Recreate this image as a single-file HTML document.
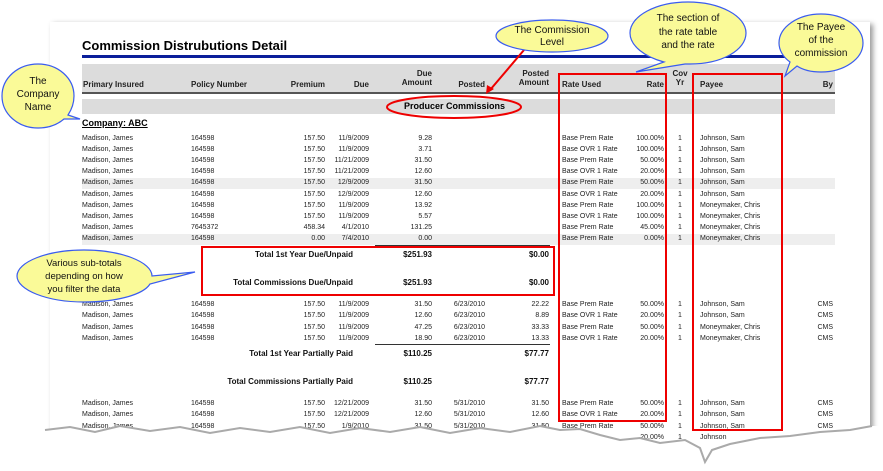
<!DOCTYPE html><html><head><style>
body{margin:0;width:883px;height:471px;overflow:hidden;background:#fff;font-family:"Liberation Sans",sans-serif;position:relative}
.a{position:absolute;white-space:nowrap}
.r{position:absolute;left:0;width:883px;height:11px;font-size:7px;color:#222}
.r span{position:absolute;top:1px;white-space:nowrap}
.s{background:linear-gradient(to right,transparent 82px,#eee 82px,#eee 835px,transparent 835px)}
.c1{left:82px}.c2{left:191px}.c3{right:558px}.c4{right:514px}.c5{right:451px}.c6{right:398px}.c7{right:334px}.c8{left:562px}.c9{right:219px}.c10{left:670px;width:20px;text-align:center}.c11{left:700px}.c12{right:50px}
.h{position:absolute;font-size:8px;font-weight:bold;color:#222;white-space:nowrap}
.t{position:absolute;font-size:8px;font-weight:bold;color:#111}
</style></head><body>
<div class="a" style="left:50px;top:22px;width:820px;height:440px;background:#fff;box-shadow:3px 2px 5px #999"></div>
<div class="a" style="left:82px;top:38px;font-size:13px;font-weight:bold;color:#000">Commission Distrubutions Detail</div>
<div class="a" style="left:82px;top:55px;width:753px;height:3px;background:#0a1e9a"></div>
<div class="a" style="left:82px;top:64px;width:753px;height:28px;background:#dcdcdc"></div>
<div class="a" style="left:82px;top:92px;width:753px;height:2px;background:#555"></div>
<div class="a" style="left:82px;top:99px;width:753px;height:15px;background:#dcdcdc"></div>
<div class="h" style="left:83px;top:80px">Primary Insured</div>
<div class="h" style="left:191px;top:80px">Policy Number</div>
<div class="h" style="right:558px;top:80px">Premium</div>
<div class="h" style="right:514px;top:80px">Due</div>
<div class="h" style="right:451px;top:69px;text-align:right">Due<br>Amount</div>
<div class="h" style="right:398px;top:80px">Posted</div>
<div class="h" style="right:334px;top:69px;text-align:right">Posted<br>Amount</div>
<div class="h" style="left:562px;top:80px">Rate Used</div>
<div class="h" style="right:219px;top:80px">Rate</div>
<div class="h" style="left:670px;width:20px;text-align:center;top:69px">Cov<br>Yr</div>
<div class="h" style="left:700px;top:80px">Payee</div>
<div class="h" style="right:50px;top:80px">By</div>
<div class="a" style="left:404px;top:101px;font-size:9px;font-weight:bold">Producer Commissions</div>
<div class="a" style="left:82px;top:118px;font-size:9px;font-weight:bold;text-decoration:underline">Company: ABC</div>

<div class="r" style="top:134px"><span class="c1">Madison, James</span><span class="c2">164598</span><span class="c3">157.50</span><span class="c4">11/9/2009</span><span class="c5">9.28</span><span class="c8">Base Prem Rate</span><span class="c9">100.00%</span><span class="c10">1</span><span class="c11">Johnson, Sam</span></div>
<div class="r" style="top:145px"><span class="c1">Madison, James</span><span class="c2">164598</span><span class="c3">157.50</span><span class="c4">11/9/2009</span><span class="c5">3.71</span><span class="c8">Base OVR 1 Rate</span><span class="c9">100.00%</span><span class="c10">1</span><span class="c11">Johnson, Sam</span></div>
<div class="r" style="top:156px"><span class="c1">Madison, James</span><span class="c2">164598</span><span class="c3">157.50</span><span class="c4">11/21/2009</span><span class="c5">31.50</span><span class="c8">Base Prem Rate</span><span class="c9">50.00%</span><span class="c10">1</span><span class="c11">Johnson, Sam</span></div>
<div class="r" style="top:167px"><span class="c1">Madison, James</span><span class="c2">164598</span><span class="c3">157.50</span><span class="c4">11/21/2009</span><span class="c5">12.60</span><span class="c8">Base OVR 1 Rate</span><span class="c9">20.00%</span><span class="c10">1</span><span class="c11">Johnson, Sam</span></div>
<div class="r s" style="top:178px"><span class="c1">Madison, James</span><span class="c2">164598</span><span class="c3">157.50</span><span class="c4">12/9/2009</span><span class="c5">31.50</span><span class="c8">Base Prem Rate</span><span class="c9">50.00%</span><span class="c10">1</span><span class="c11">Johnson, Sam</span></div>
<div class="r" style="top:190px"><span class="c1">Madison, James</span><span class="c2">164598</span><span class="c3">157.50</span><span class="c4">12/9/2009</span><span class="c5">12.60</span><span class="c8">Base OVR 1 Rate</span><span class="c9">20.00%</span><span class="c10">1</span><span class="c11">Johnson, Sam</span></div>
<div class="r" style="top:201px"><span class="c1">Madison, James</span><span class="c2">164598</span><span class="c3">157.50</span><span class="c4">11/9/2009</span><span class="c5">13.92</span><span class="c8">Base Prem Rate</span><span class="c9">100.00%</span><span class="c10">1</span><span class="c11">Moneymaker, Chris</span></div>
<div class="r" style="top:212px"><span class="c1">Madison, James</span><span class="c2">164598</span><span class="c3">157.50</span><span class="c4">11/9/2009</span><span class="c5">5.57</span><span class="c8">Base OVR 1 Rate</span><span class="c9">100.00%</span><span class="c10">1</span><span class="c11">Moneymaker, Chris</span></div>
<div class="r" style="top:223px"><span class="c1">Madison, James</span><span class="c2">7645372</span><span class="c3">458.34</span><span class="c4">4/1/2010</span><span class="c5">131.25</span><span class="c8">Base Prem Rate</span><span class="c9">45.00%</span><span class="c10">1</span><span class="c11">Moneymaker, Chris</span></div>
<div class="r s" style="top:234px"><span class="c1">Madison, James</span><span class="c2">164598</span><span class="c3">0.00</span><span class="c4">7/4/2010</span><span class="c5">0.00</span><span class="c8">Base Prem Rate</span><span class="c9">0.00%</span><span class="c10">1</span><span class="c11">Moneymaker, Chris</span></div>
<div class="a" style="left:375px;top:245px;width:175px;height:1px;background:#333"></div>

<div class="t" style="right:530px;top:250px">Total 1st Year Due/Unpaid</div>
<div class="t" style="right:451px;top:250px">$251.93</div>
<div class="t" style="right:334px;top:250px">$0.00</div>
<div class="t" style="right:530px;top:278px">Total Commissions Due/Unpaid</div>
<div class="t" style="right:451px;top:278px">$251.93</div>
<div class="t" style="right:334px;top:278px">$0.00</div>

<div class="r" style="top:300px"><span class="c1">Madison, James</span><span class="c2">164598</span><span class="c3">157.50</span><span class="c4">11/9/2009</span><span class="c5">31.50</span><span class="c6">6/23/2010</span><span class="c7">22.22</span><span class="c8">Base Prem Rate</span><span class="c9">50.00%</span><span class="c10">1</span><span class="c11">Johnson, Sam</span><span class="c12">CMS</span></div>
<div class="r" style="top:311px"><span class="c1">Madison, James</span><span class="c2">164598</span><span class="c3">157.50</span><span class="c4">11/9/2009</span><span class="c5">12.60</span><span class="c6">6/23/2010</span><span class="c7">8.89</span><span class="c8">Base OVR 1 Rate</span><span class="c9">20.00%</span><span class="c10">1</span><span class="c11">Johnson, Sam</span><span class="c12">CMS</span></div>
<div class="r" style="top:323px"><span class="c1">Madison, James</span><span class="c2">164598</span><span class="c3">157.50</span><span class="c4">11/9/2009</span><span class="c5">47.25</span><span class="c6">6/23/2010</span><span class="c7">33.33</span><span class="c8">Base Prem Rate</span><span class="c9">50.00%</span><span class="c10">1</span><span class="c11">Moneymaker, Chris</span><span class="c12">CMS</span></div>
<div class="r" style="top:334px"><span class="c1">Madison, James</span><span class="c2">164598</span><span class="c3">157.50</span><span class="c4">11/9/2009</span><span class="c5">18.90</span><span class="c6">6/23/2010</span><span class="c7">13.33</span><span class="c8">Base OVR 1 Rate</span><span class="c9">20.00%</span><span class="c10">1</span><span class="c11">Moneymaker, Chris</span><span class="c12">CMS</span></div>
<div class="a" style="left:375px;top:344px;width:175px;height:1px;background:#333"></div>
<div class="t" style="right:530px;top:349px">Total 1st Year Partially Paid</div>
<div class="t" style="right:451px;top:349px">$110.25</div>
<div class="t" style="right:334px;top:349px">$77.77</div>
<div class="t" style="right:530px;top:377px">Total Commissions Partially Paid</div>
<div class="t" style="right:451px;top:377px">$110.25</div>
<div class="t" style="right:334px;top:377px">$77.77</div>

<div class="r" style="top:399px"><span class="c1">Madison, James</span><span class="c2">164598</span><span class="c3">157.50</span><span class="c4">12/21/2009</span><span class="c5">31.50</span><span class="c6">5/31/2010</span><span class="c7">31.50</span><span class="c8">Base Prem Rate</span><span class="c9">50.00%</span><span class="c10">1</span><span class="c11">Johnson, Sam</span><span class="c12">CMS</span></div>
<div class="r" style="top:410px"><span class="c1">Madison, James</span><span class="c2">164598</span><span class="c3">157.50</span><span class="c4">12/21/2009</span><span class="c5">12.60</span><span class="c6">5/31/2010</span><span class="c7">12.60</span><span class="c8">Base OVR 1 Rate</span><span class="c9">20.00%</span><span class="c10">1</span><span class="c11">Johnson, Sam</span><span class="c12">CMS</span></div>
<div class="r" style="top:422px"><span class="c1">Madison, James</span><span class="c2">164598</span><span class="c3">157.50</span><span class="c4">1/9/2010</span><span class="c5">31.50</span><span class="c6">5/31/2010</span><span class="c7">31.50</span><span class="c8">Base Prem Rate</span><span class="c9">50.00%</span><span class="c10">1</span><span class="c11">Johnson, Sam</span><span class="c12">CMS</span></div>
<div class="r" style="top:433px"><span class="c9">20.00%</span><span class="c10">1</span><span class="c11">Johnson</span></div>

<svg class="a" style="left:0;top:0" width="883" height="471" viewBox="0 0 883 471">
<path d="M45,430 L70,427 L95,432 L120,426 L150,431 L180,427 L210,433 L240,428 L270,432 L300,427 L330,433 L360,428 L390,432 L420,427 L450,433 L480,428 L510,432 L540,426 L560,430 L580,429 L600,435 L620,440 L640,438 L660,443 L685,440 L700,448 L705,462 L712,450 L730,444 L760,438 L790,436 L820,432 L850,430 L872,426 L890,426 L890,480 L-10,480 L-10,430 Z" fill="#fff" stroke="none"/>
<polyline points="45,430 70,427 95,432 120,426 150,431 180,427 210,433 240,428 270,432 300,427 330,433 360,428 390,432 420,427 450,433 480,428 510,432 540,426 560,430 580,429 600,435 620,440 640,438 660,443 685,440 700,448 705,462 712,450 730,444 760,438 790,436 820,432 850,430 872,426" fill="none" stroke="#aaa" stroke-width="2"/>
<g fill="none" stroke="#e00" stroke-width="2">
<rect x="559" y="74" width="107" height="347"/>
<rect x="693" y="74" width="89" height="356"/>
<rect x="202" y="247" width="352" height="48"/>
<ellipse cx="454" cy="107" rx="67" ry="11"/>
<line x1="524" y1="50" x2="490" y2="90"/>
</g>
<path d="M486,94 L487,85 L494,89 Z" fill="#e00"/>
<g fill="#fafa98" stroke="#3a5cf0" stroke-width="1.2">
<path d="M38,64 C58,64 74,78 74,96 C74,105 70,112 68,115 L80,119 L64,119 C57,125 48,128 38,128 C18,128 2,114 2,96 C2,78 18,64 38,64 Z"/>
<ellipse cx="552" cy="36" rx="56" ry="16"/>
<path d="M688,2 C720,2 746,16 746,33 C746,50 722,64 690,64 L685,64 L636,72 L664,62 C645,57 630,46 630,33 C630,16 656,2 688,2 Z"/>
<path d="M821,14 C844,14 863,27 863,43 C863,59 844,72 821,72 C811,72 803,70 797,66 L785,76 L790,62 C783,57 779,50 779,43 C779,27 798,14 821,14 Z"/>
<path d="M84,250 C121,250 152,262 152,276 L195,272 L150,284 C143,295 116,302 84,302 C47,302 17,290 17,276 C17,262 47,250 84,250 Z"/>
</g>
<g font-family="Liberation Sans,sans-serif" font-size="10" fill="#111" text-anchor="middle">
<text x="38" y="84">The</text><text x="38" y="97">Company</text><text x="38" y="110">Name</text>
<text x="552" y="33">The Commission</text><text x="552" y="45">Level</text>
<text x="688" y="21">The section of</text><text x="688" y="35">the rate table</text><text x="688" y="48">and the rate</text>
<text x="821" y="30">The Payee</text><text x="821" y="43">of the</text><text x="821" y="56">commission</text>
<text x="84" y="266" font-size="9.5">Various sub-totals</text><text x="84" y="279" font-size="9.5">depending on how</text><text x="84" y="292" font-size="9.5">you filter the data</text>
</g>
</svg>
</body></html>
